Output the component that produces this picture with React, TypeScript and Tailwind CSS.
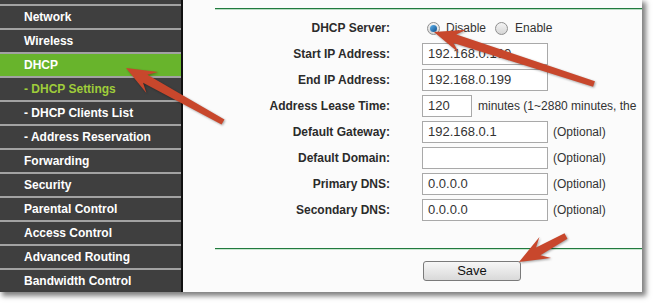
import React from "react";

// sidebar menu rows
interface menuItem {
  label: string;
  active?: boolean; // green row
  sub?: boolean; // sub menu line
  current?: boolean; // selected sub menu
}

const menu: menuItem[] = [
  { label: "Network" },
  { label: "Wireless" },
  { label: "DHCP", active: true },
  { label: "- DHCP Settings", sub: true, current: true },
  { label: "- DHCP Clients List", sub: true },
  { label: "- Address Reservation", sub: true },
  { label: "Forwarding" },
  { label: "Security" },
  { label: "Parental Control" },
  { label: "Access Control" },
  { label: "Advanced Routing" },
  { label: "Bandwidth Control" },
];

function Radio({ checked }: { checked?: boolean }) {
  return (
    <span className="w-[13px] h-[13px] rounded-full border border-[#8f8f8f] bg-gradient-to-b from-[#f4f4f4] to-[#d6d6d6] flex items-center justify-center">
      {checked && (
        <span className="w-[7px] h-[7px] rounded-full bg-gradient-to-br from-[#5fb4ee] to-[#0b4f8c]" />
      )}
    </span>
  );
}

function TextBox({ value, w = "w-[126px]" }: { value: string; w?: string }) {
  return (
    <div
      className={`${w} shrink-0 h-[22px] border border-[#a9a9a9] bg-white pl-[5px] text-[13px] leading-[20px] text-[#333]`}
    >
      {value}
    </div>
  );
}

function Row({ label, children }: { label: string; children: React.ReactNode }) {
  return (
    <div className="flex items-center h-[26px]">
      <div className="w-[207px] shrink-0 whitespace-nowrap text-right font-bold text-[12px] text-[#2b2b2b]">
        {label}
      </div>
      <div className="pl-[32px] shrink-0 flex items-center whitespace-nowrap">{children}</div>
    </div>
  );
}

// arrow drawn from tail to tip
function Arrow({ x1, y1, x2, y2 }: { x1: number; y1: number; x2: number; y2: number }) {
  const dx = x2 - x1;
  const dy = y2 - y1;
  const len = Math.sqrt(dx * dx + dy * dy);
  const ang = (Math.atan2(dy, dx) * 180) / Math.PI;
  const pts = [
    [0, -3],
    [len - 22, -4.5],
    [len - 30, -12],
    [len, 0],
    [len - 30, 12],
    [len - 22, 4.5],
    [0, 3],
  ]
    .map((p) => p.join(","))
    .join(" ");
  return (
    <g transform={`translate(${x1},${y1}) rotate(${ang})`}>
      <polygon points={pts} fill="#c8472c" />
    </g>
  );
}

export default function App() {
  return (
    <div
      className="relative w-[657px] h-[308px] bg-white overflow-hidden"
      style={{ fontFamily: '"Liberation Sans", Arial, sans-serif' }}
    >
      <div className="flex w-[642px] h-[292px] shadow-[3px_3px_5px_1px_rgba(0,0,0,0.5)]">
        {/* 왼쪽 메뉴 */}
        <div className="w-[183px] shrink-0 bg-[#3f3f3f] border-r-2 border-[#111] flex flex-col">
          <div className="h-[4px]" />
          {menu.map((m, i) => (
            <div
              key={i}
              className={`h-[24px] border-t-2 border-[#a2a2a2] pl-[24px] text-[12px] font-bold leading-[22px] whitespace-nowrap ${
                m.active ? "bg-[#68b42c]" : ""
              } ${m.current ? "text-[#9fcd3a]" : "text-white"}`}
            >
              {m.label}
            </div>
          ))}
        </div>

        {/* 설정 폼 */}
        <div className="flex-1 min-w-0 bg-[#fbfbfb] overflow-hidden">
          <div className="mt-[8px] ml-[32px] h-[1px] bg-[#217a3e]" />
          <div className="ml-[32px] h-[1px] bg-[#b9dcc3]" />
          <div className="mt-[5px]">
            <Row label="DHCP Server:">
              <div className="flex items-center text-[12px] text-[#333]">
                <span className="ml-[5px]">
                  <Radio checked />
                </span>
                <span className="ml-[6px]">Disable</span>
                <span className="ml-[9px]">
                  <Radio />
                </span>
                <span className="ml-[7px]">Enable</span>
              </div>
            </Row>
            <Row label="Start IP Address:">
              <TextBox value="192.168.0.100" />
            </Row>
            <Row label="End IP Address:">
              <TextBox value="192.168.0.199" />
            </Row>
            <Row label="Address Lease Time:">
              <TextBox value="120" w="w-[50px]" />
              <span className="ml-[6px] text-[12px] text-[#333]">minutes (1~2880 minutes, the</span>
            </Row>
            <Row label="Default Gateway:">
              <TextBox value="192.168.0.1" />
              <span className="ml-[5px] text-[12px] text-[#333]">(Optional)</span>
            </Row>
            <Row label="Default Domain:">
              <TextBox value="" />
              <span className="ml-[5px] text-[12px] text-[#333]">(Optional)</span>
            </Row>
            <Row label="Primary DNS:">
              <TextBox value="0.0.0.0" />
              <span className="ml-[5px] text-[12px] text-[#333]">(Optional)</span>
            </Row>
            <Row label="Secondary DNS:">
              <TextBox value="0.0.0.0" />
              <span className="ml-[5px] text-[12px] text-[#333]">(Optional)</span>
            </Row>
          </div>
          <div className="mt-[25px] ml-[32px] h-[1px] bg-[#217a3e]" />
          <div className="ml-[32px] h-[1px] bg-[#c9e6d0]" />
          <div className="mt-[8px] pl-[240px]">
            <button className="w-[98px] h-[20px] rounded-[3px] border border-[#7a7a7a] bg-gradient-to-b from-[#f7f7f7] to-[#d9d9d9] text-[13px] leading-[18px] text-[#111]">
              Save
            </button>
          </div>
        </div>
      </div>

      {/* 화살표 */}
      <svg
        className="absolute left-0 top-0 pointer-events-none drop-shadow-[1px_1px_1px_rgba(0,0,0,0.35)]"
        width={657}
        height={308}
      >
        <Arrow x1={223} y1={122} x2={126} y2={68} />
        <Arrow x1={594} y1={84} x2={434} y2={32} />
        <Arrow x1={566} y1={236} x2={519} y2={262} />
      </svg>
    </div>
  );
}
